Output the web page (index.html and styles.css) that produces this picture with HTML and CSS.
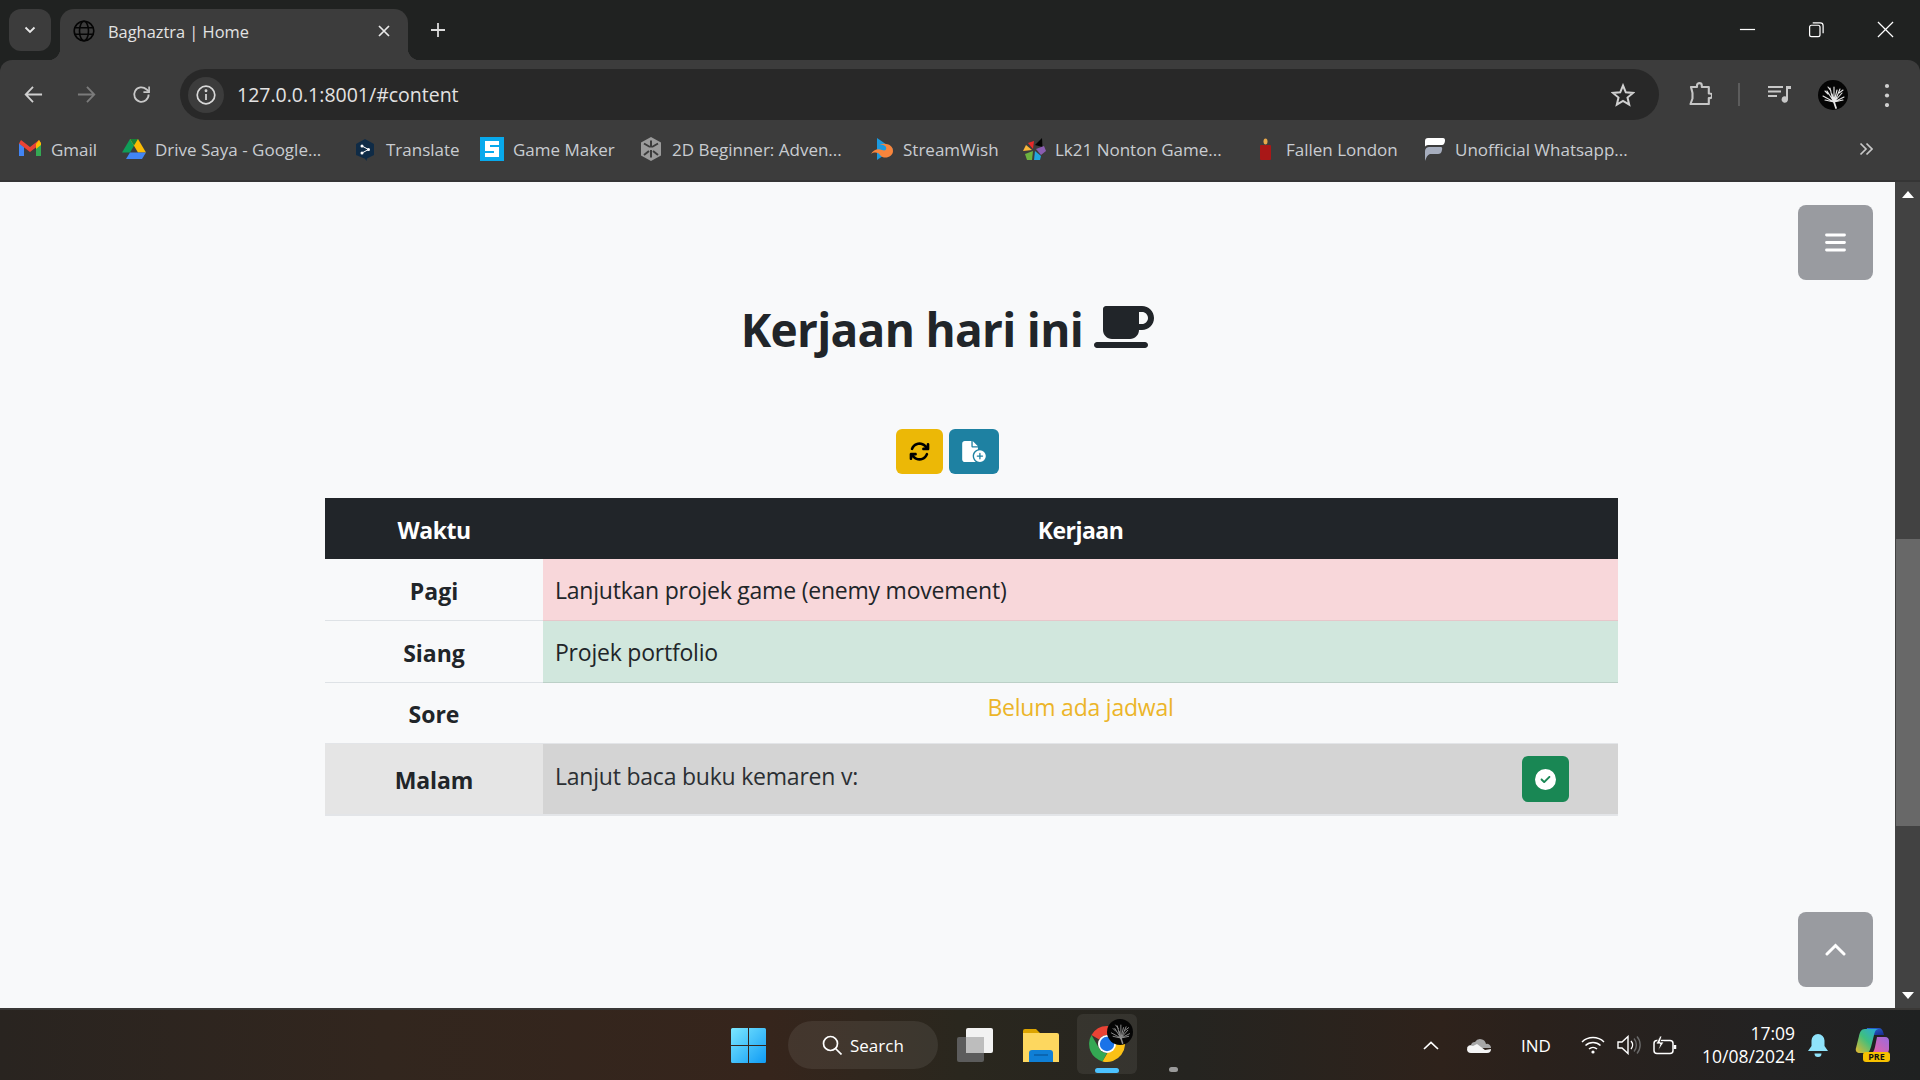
FILE: index.html
```html
<!DOCTYPE html>
<html lang="id">
<head>
<meta charset="utf-8">
<title>Baghaztra | Home</title>
<link rel="stylesheet" href="styles.css">
</head>
<body>
<svg class="defs" width="0" height="0" aria-hidden="true">
  <symbol id="avatar" viewBox="0 0 30 30">
    <ellipse cx="15" cy="15" rx="15" ry="15" fill="#050505"/>
    <g stroke="currentColor" stroke-width="1.1" fill="none" stroke-linecap="round">
      <path d="M16 22 14 14M16 22 9 11M16 22 19 10M16 22 24 13M16 22 5 16M16 22 26 17M15 21 12 8M16 21 16 7M17 21 22 9M16 22 7 20M16 22 25 20M10 14 7 11M21 13 25 10M13 11 10 7"/>
      <path d="M16 22 18 28" stroke-width="1.8"/>
    </g>
  </symbol>
</svg>

<header class="tabstrip">
  <div class="tablist-btn">
    <svg class="ico-chev" viewBox="0 0 12 8"><path d="M1.5 1.5 6 6l4.500-4.500" fill="none" stroke="#e8e8e8" stroke-width="1.8"/></svg>
  </div>
  <div class="tab">
    <svg class="tab-globe" viewBox="0 0 22 22" fill="none" stroke="#050505" stroke-width="1.600"><circle cx="11" cy="11" r="9.800"/><ellipse cx="11" cy="11" rx="4.500" ry="9.800"/><path d="M1.500 7.700h19M1.500 14.300h19"/></svg>
    <span class="tab-title">Baghaztra | Home</span>
    <svg class="tab-close" viewBox="0 0 12 12"><path d="M1 1l10 10M11 1 1 11" stroke="#e8e8e8" stroke-width="1.700"/></svg>
  </div>
  <svg class="tab-new" viewBox="0 0 16 16"><path d="M8 1v14M1 8h14" stroke="#dcdcdc" stroke-width="1.800"/></svg>
  <div class="win-controls">
    <svg class="win-ico" viewBox="0 0 18 18"><path d="M1 9h16" stroke="#fff" stroke-width="1.300"/></svg>
    <svg class="win-ico" viewBox="0 0 18 18" fill="none" stroke="#fff" stroke-width="1.300"><rect x="1.700" y="4.500" width="11" height="12" rx="2"/><path d="M5 2h8a3 3 0 0 1 3 3v8"/></svg>
    <svg class="win-ico" viewBox="0 0 18 18"><path d="M1 1l16 16M17 1 1 17" stroke="#fff" stroke-width="1.300"/></svg>
  </div>
</header>

<nav class="toolbar">
  <svg class="nav-ico" viewBox="0 0 20 20" fill="none" stroke="#d0d0d0" stroke-width="1.900"><path d="M19 10H2M9.500 2 1.800 10l7.700 8"/></svg>
  <svg class="nav-ico" viewBox="0 0 20 20" fill="none" stroke="#7b7b7b" stroke-width="1.900"><path d="M1 10h17M10.500 2l7.700 8-7.700 8"/></svg>
  <svg class="nav-ico" viewBox="0 0 20 20" fill="none" stroke="#c8c8c8" stroke-width="1.900"><path d="M17.500 10a7.600 7.600 0 1 1-2.400-5.500L18 7"/><path d="M18 1.500V7.500h-6" stroke-width="1.700"/></svg>
  <div class="omnibox">
    <span class="info-chip">
      <svg class="info-ico" viewBox="0 0 20 20" fill="none" stroke="#d8d8d8" stroke-width="1.700"><circle cx="10" cy="10" r="8.800"/><path d="M10 9v6"/><circle cx="10" cy="5.800" r=".6" fill="#d8d8d8"/></svg>
    </span>
    <span class="url">127.0.0.1:8001/#content</span>
    <svg class="star" viewBox="0 0 24 24" fill="none" stroke="#d0d0d0" stroke-width="2"><path d="M12 2.500 14.800 9.300l7.200.6-5.500 4.700 1.700 7.100L12 17.900l-6.200 3.800 1.700-7.100L2 9.900l7.200-.6z"/></svg>
  </div>
  <svg class="puzzle" viewBox="0 0 24 24" fill="none" stroke="#c6c6c6" stroke-width="2.100"><path d="M3 6h6V4.500a2.400 2.400 0 0 1 4.800 0V6h7v6.500h1a2.300 2.300 0 0 1 0 4.600h-1V23H2.500l2-5.500V12L3 6z" stroke-linejoin="round"/></svg>
  <span class="tool-sep"></span>
  <svg class="media" viewBox="0 0 23 18"><path d="M0 2h15M0 6.500h13M0 11h9" stroke="#c8c8c8" stroke-width="2"/><path d="M18 1h5v3h-3v10.500a3.200 3.200 0 1 1-2-3z" fill="#c8c8c8"/></svg>
  <svg class="avatar"><use href="#avatar"/></svg>
  <svg class="dots" viewBox="0 0 6 24"><circle cx="3" cy="3" r="2.100" fill="#d0d0d0"/><circle cx="3" cy="12.500" r="2.100" fill="#d0d0d0"/><circle cx="3" cy="22" r="2.100" fill="#d0d0d0"/></svg>
</nav>

<div class="bookmarks">
  <a class="bm">
    <svg class="bm-ico" viewBox="0 0 24 24"><path d="M1 6v13h5V10z" fill="#4285f4"/><path d="M18 10v9h5V6z" fill="#34a853"/><path d="M1 6.500 12 15l11-8.500-2-3.500-9 7-9-7z" fill="#ea4335"/><path d="M18 7v5l5-4V6l-2-3z" fill="#fbbc04"/></svg>
    <span>Gmail</span>
  </a>
  <a class="bm">
    <svg class="bm-ico" viewBox="0 0 24 24"><path d="M8 2h8L8 15.500H0z" fill="#0f9d58"/><path d="M8 2h8l8 13.500h-8z" fill="#fbbc04"/><path d="M8 15.500h16L20 22H4z" fill="#4285f4"/><path d="M8 2h8l-4 6.500z" fill="#188038"/></svg>
    <span>Drive Saya - Google...</span>
  </a>
  <a class="bm">
    <svg class="bm-ico" viewBox="0 0 24 24"><path d="M12 2 21 7v11l-7 3.500L13.500 24 12 21.800 3 18V7z" fill="#0f2b46"/><circle cx="9" cy="9" r="1.500" fill="#fff"/><circle cx="9" cy="16" r="1.500" fill="#fff"/><circle cx="15.500" cy="12.500" r="1.500" fill="#fff"/><path d="M9 9l6.500 3.500L9 16" stroke="#fff" fill="none"/></svg>
    <span>Translate</span>
  </a>
  <a class="bm">
    <svg class="bm-ico" viewBox="0 0 24 24"><rect width="24" height="24" fill="#08a9ec"/><path d="M5 4H19V8H10V10H19V20H5V16H14V14H5Z" fill="#fff"/></svg>
    <span>Game Maker</span>
  </a>
  <a class="bm">
    <svg class="bm-ico" viewBox="0 0 24 24" fill="#9b9b9b"><path d="M12 0 22 5.500v13L12 24 2 18.500v-13z"/><path d="M12 3.500v7M12 13v7.500M5 6.500l6 3.500M19 6.500l-6 3.500M5 18l5-4M19 18l-5-4" stroke="#3c3c3c" stroke-width="2"/></svg>
    <span>2D Beginner: Adven...</span>
  </a>
  <a class="bm">
    <svg class="bm-ico" viewBox="0 0 24 24"><path d="M7 1 23 12 7 23z" fill="#1b9ae0"/><path d="M8 8c8-3 15 0 15 6s-9 9-13 4c-2-3-6-3-9-1 2-4 7-6 11-4 3 1 5 0 4-3-1-2-5-3-8-2z" fill="#f8853c"/></svg>
    <span>StreamWish</span>
  </a>
  <a class="bm">
    <svg class="bm-ico" viewBox="0 0 24 24"><path d="M13 8l7-7 .5 9z" fill="#050505"/><path d="M11 12 6 6l6-2z" fill="#e82a2a"/><path d="M10 13 1 14l3-6z" fill="#f9b73a"/><path d="M14 12l8-3 2 5-5 4z" fill="#8a5db0"/><path d="M11 14l-1 9H5l-2-6z" fill="#6db33f"/><path d="M13 14l6 5-1 4h-6z" fill="#22a7e0"/></svg>
    <span>Lk21 Nonton Game...</span>
  </a>
  <a class="bm">
    <svg class="bm-ico" viewBox="0 0 24 24"><rect x="7" y="8" width="11" height="15" rx="1" fill="#a91717"/><ellipse cx="12.500" cy="4.500" rx="2" ry="3" fill="#e8a84a"/></svg>
    <span>Fallen London</span>
  </a>
  <a class="bm">
    <svg class="bm-ico" viewBox="0 0 24 24"><path d="M3 10V4c0-2 1-3 3-3h15c1.500 0 2.200 1 2 3-.3 2-1 4-3 4H8c-3 0-5 .5-5 2z" fill="#fff"/><path d="M3 24V15c0-4 2-5 5-5h11c1 0 1.500 1 1 3-.5 3-2 4-4 4H9c-3 0-4 2-6 7z" fill="#a6adbd"/></svg>
    <span>Unofficial Whatsapp...</span>
  </a>
  <svg class="bm-more" viewBox="0 0 14 14" fill="none" stroke="#c8c8c8" stroke-width="1.700"><path d="M1.500 1.500 7 7l-5.500 5.500M7.500 1.500 13 7l-5.500 5.500"/></svg>
</div>

<div class="viewport">
  <main class="page">
    <h1 class="heading">Kerjaan hari ini <svg class="cup" viewBox="0 0 640 512"><path d="M96 64c0-17.700 14.300-32 32-32H448h64c70.700 0 128 57.300 128 128s-57.300 128-128 128H480c0 53-43 96-96 96H192c-53 0-96-43-96-96V64zM480 224h32c35.300 0 64-28.700 64-64s-28.700-64-64-64H480V224zM32 416H544c17.700 0 32 14.300 32 32s-14.300 32-32 32H32c-17.700 0-32-14.300-32-32s14.300-32 32-32z"/></svg></h1>
    <div class="actions">
      <button class="btn btn-warn" type="button"><svg class="ico-sync" viewBox="0 0 512 512"><path d="M105.100 202.600c7.700-21.800 20.200-42.300 37.800-59.800c62.500-62.500 163.800-62.500 226.300 0L386.300 160H352c-17.700 0-32 14.300-32 32s14.300 32 32 32H463.500c0 0 0 0 0 0h.4c17.700 0 32-14.300 32-32V80c0-17.700-14.300-32-32-32s-32 14.300-32 32v35.200L414.400 97.600c-87.500-87.500-229.300-87.500-316.800 0C73.200 122 55.600 150.700 44.800 181.400c-5.900 16.700 2.900 34.900 19.500 40.800s34.900-2.900 40.800-19.500zM39 289.300c-5 1.500-9.800 4.200-13.700 8.200c-4 4-6.700 8.800-8.100 14c-.3 1.200-.6 2.500-.8 3.800c-.3 1.700-.4 3.400-.4 5.100V432c0 17.700 14.300 32 32 32s32-14.300 32-32V396.900l17.600 17.500 0 0c87.500 87.400 229.300 87.400 316.700 0c24.400-24.400 42.100-53.100 52.900-83.700c5.900-16.700-2.900-34.900-19.500-40.800s-34.900 2.900-40.800 19.500c-7.700 21.800-20.200 42.300-37.800 59.800c-62.500 62.500-163.800 62.500-226.300 0l-.1-.1L125.600 352H160c17.700 0 32-14.300 32-32s-14.300-32-32-32H48.400c-1.600 0-3.200 .1-4.800 .3s-3.100 .5-4.600 1z"/></svg></button>
      <button class="btn btn-info" type="button"><svg class="ico-file" viewBox="0 0 576 512"><path d="M0 64C0 28.700 28.700 0 64 0H224V128c0 17.700 14.300 32 32 32H384v38.600C310.100 219.500 256 287.400 256 368c0 59.100 29.100 111.300 73.700 143.300c-3.200 .5-6.400 .7-9.700 .7H64c-35.300 0-64-28.700-64-64V64zm384 64H256V0L384 128zm48 96a144 144 0 1 1 0 288 144 144 0 1 1 0-288zm16 80c0-8.800-7.200-16-16-16s-16 7.200-16 16v48H368c-8.800 0-16 7.200-16 16s7.200 16 16 16h48v48c0 8.800 7.200 16 16 16s16-7.200 16-16V384h48c8.800 0 16-7.200 16-16s-7.200-16-16-16H448V304z"/></svg></button>
    </div>
    <table class="schedule">
      <thead>
        <tr><th class="col-time">Waktu</th><th>Kerjaan</th></tr>
      </thead>
      <tbody>
        <tr class="row-task"><th>Pagi</th><td class="bg-danger">Lanjutkan projek game (enemy movement)</td></tr>
        <tr class="row-task"><th>Siang</th><td class="bg-success">Projek portfolio</td></tr>
        <tr class="row-empty"><th>Sore</th><td class="empty">Belum ada jadwal</td></tr>
        <tr class="row-done">
          <th>Malam</th>
          <td>
            <div class="done-cell">
              <span class="done-text">Lanjut baca buku kemaren v:</span>
              <button class="btn btn-ok" type="button"><svg class="ico-check" viewBox="0 0 512 512"><path d="M256 512A256 256 0 1 0 256 0a256 256 0 1 0 0 512zM369 209L241 337c-9.400 9.400-24.600 9.400-33.900 0l-64-64c-9.400-9.400-9.400-24.600 0-33.900s24.600-9.400 33.900 0l47 47L335 175c9.400-9.400 24.600-9.400 33.900 0s9.400 24.600 0 33.900z"/></svg></button>
            </div>
          </td>
        </tr>
      </tbody>
    </table>
    <button class="float-btn float-top" type="button"><svg class="ico-bars" viewBox="0 0 21 19"><path d="M1.500 2h18M1.500 9.500h18M1.500 17h18" stroke="#fff" stroke-width="2.800" stroke-linecap="round"/></svg></button>
    <button class="float-btn float-bottom" type="button"><svg class="ico-up" viewBox="0 0 21 13"><path d="M2 11 10.500 2.500 19 11" fill="none" stroke="#fff" stroke-width="3" stroke-linecap="round"/></svg></button>
  </main>
  <aside class="scrollbar">
    <span class="sb-arrow sb-arrow-up"></span>
    <div class="sb-track"><div class="sb-thumb"></div></div>
    <span class="sb-arrow sb-arrow-down"></span>
  </aside>
</div>

<footer class="taskbar">
  <svg class="tb-win" viewBox="0 0 35 35">
    <defs><linearGradient id="wg" x1="0" y1="0" x2="1" y2="1"><stop offset="0" stop-color="#7ce8ff"/><stop offset="1" stop-color="#0f9bf5"/></linearGradient></defs>
    <path d="M1.500 0H17V17H0V1.500A1.500 1.500 0 0 1 1.500 0zM18 0h15.500A1.500 1.500 0 0 1 35 1.500V17H18zM0 18h17v17H1.500A1.500 1.500 0 0 1 0 33.500zM18 18h17v15.500a1.500 1.500 0 0 1-1.500 1.500H18z" fill="url(#wg)"/>
  </svg>
  <div class="tb-search">
    <svg class="tb-search-ico" viewBox="0 0 20 20" fill="none" stroke="#fff" stroke-width="1.700"><circle cx="8.500" cy="8.500" r="7"/><path d="M13.500 13.500 19.500 19.500"/></svg>
    <span>Search</span>
  </div>
  <svg class="tb-view" viewBox="0 0 36 34"><rect y="9" width="27" height="25" rx="2" fill="#5c5c5c"/><rect x="9" width="27" height="25" rx="2" fill="#f2f2f2"/><rect x="9" y="9" width="18" height="16" fill="#bdbdbd"/></svg>
  <svg class="tb-folder" viewBox="0 0 36 33"><path d="M0 2a2 2 0 0 1 2-2h11l4 4H0z" fill="#dca400"/><path d="M0 4h34a2 2 0 0 1 2 2v27H0z" fill="#fdd75f"/><path d="M6 33V24a3 3 0 0 1 3-3h18a3 3 0 0 1 3 3v9z" fill="#0f7fd6"/><path d="M11 26h14" stroke="#0a5ea6" stroke-width="1.500"/></svg>
  <div class="tb-chrome-tile">
    <svg class="tb-chrome" viewBox="0 0 36 36">
      <path d="M18 0a18 18 0 0 1 15.600 9H18a9 9 0 0 0-7.800 4.500L2.500 9A18 18 0 0 1 18 0z" fill="#ea4335"/>
      <path d="M2.500 9l7.700 13.500A9 9 0 0 0 18 27l-4.500 8.400A18 18 0 0 1 2.500 9z" fill="#34a853"/>
      <path d="M33.600 9A18 18 0 0 1 13.500 35.400L21 22.500A9 9 0 0 0 25.800 13.500z" fill="#fbc116"/>
      <circle cx="18" cy="18" r="9" fill="#fff"/><circle cx="18" cy="18" r="7.200" fill="#1a73e8"/>
    </svg>
    <svg class="tb-chrome-av"><use href="#avatar"/></svg>
    <span class="tb-indicator"></span>
  </div>
  <span class="tb-dot"></span>
  <svg class="tray-caret" viewBox="0 0 16 9"><path d="M1 8 8 1.500 15 8" fill="none" stroke="#fff" stroke-width="1.700"/></svg>
  <svg class="tray-cloud" viewBox="0 0 24 16"><path d="M4 8a4 4 0 0 1 4-3 6 6 0 0 1 11 2A4 4 0 0 1 24 11H0a4 4 0 0 1 4-3z" fill="#a7a7a7"/><path d="M0 12a4 4 0 0 1 6-3l4-2 8 6 6-1a4 4 0 0 1-4 4H4a4 4 0 0 1-4-4z" fill="#f5f5f5"/></svg>
  <span class="tray-lang">IND</span>
  <svg class="tray-wifi" viewBox="0 0 24 18" fill="none" stroke="#fff" stroke-width="1.500"><path d="M1 6a16 16 0 0 1 22 0M4.500 9.500a11 11 0 0 1 15 0M8 13a6 6 0 0 1 8 0"/><circle cx="12" cy="16" r="1.600" fill="#fff" stroke="none"/></svg>
  <svg class="tray-vol" viewBox="0 0 24 20" fill="none" stroke="#fff" stroke-width="1.400"><path d="M1 7h4l6-5.500v17L5 13H1z"/><path d="M14 6a6 6 0 0 1 0 8"/><path d="M17 3.500a10 10 0 0 1 0 13M20 1.500a13 13 0 0 1 0 17" stroke="#6a6a6a"/></svg>
  <svg class="tray-bat" viewBox="0 0 24 20" fill="none" stroke="#fff" stroke-width="1.500"><rect x="1" y="5.500" width="19" height="13" rx="3"/><path d="M22 10v4" stroke-width="2.500"/><path d="M7 1 3 9h4l-2 7 6-9H7l2-6z" fill="#fff" stroke="#241f1c" stroke-width=".8"/></svg>
  <div class="tray-clock"><span>17:09</span><span>10/08/2024</span></div>
  <svg class="tray-bell" viewBox="0 0 20 23"><path d="M10 0a6.500 6.500 0 0 1 6.500 6.500V12l3.500 5H0l3.500-5V6.500A6.500 6.500 0 0 1 10 0z" fill="#8fe3fb"/><path d="M6.500 19.500h7a3.500 3.500 0 0 1-7 0z" fill="#8fe3fb"/></svg>
  <div class="tray-copilot">
    <svg class="copilot-ico" viewBox="0 0 34 27">
      <defs>
        <linearGradient id="cg1" x1="0" y1="1" x2="1" y2="0"><stop offset="0" stop-color="#e9b72c"/><stop offset=".5" stop-color="#3fbf7f"/><stop offset="1" stop-color="#25a6e6"/></linearGradient>
        <linearGradient id="cg2" x1="0" y1="0" x2="1" y2="1"><stop offset="0" stop-color="#2a6fe0"/><stop offset="1" stop-color="#1a2a8c"/></linearGradient>
        <linearGradient id="cg3" x1="0" y1="1" x2="1" y2="0"><stop offset="0" stop-color="#f0609b"/><stop offset="1" stop-color="#9a6be0"/></linearGradient>
      </defs>
      <path d="M12 0h12c3 0 4 3 5 7H10z" fill="url(#cg2)"/>
      <path d="M10 1C6 1 5 4 4 8L1 20c-1 3 1 5 4 5h6c3 0 4-3 5-6l3-12c1-4 2-6 5-6z" fill="url(#cg1)"/>
      <path d="M22 9h8c3 0 4 2 4 4v8c0 3-2 5-5 5H15c3-1 4-3 5-7z" fill="url(#cg3)"/>
    </svg>
    <span class="copilot-pre">PRE</span>
  </div>
</footer>
</body>
</html>
```

FILE: styles.css
```css
* { box-sizing: border-box; }
html, body { margin: 0; padding: 0; height: 100%; overflow: hidden; }
body {
  width: 1920px;
  height: 1080px;
  display: flex;
  flex-direction: column;
  background: #202221;
  font-family: "Open Sans", "Noto Sans", sans-serif;
}
svg { display: block; flex: none; }
.defs { position: absolute; }

/* Browser chrome */
.tabstrip {
  height: 60px;
  flex: none;
  background: #202221;
  display: flex;
  align-items: flex-start;
  padding: 9px 0 0 9px;
}
.tablist-btn {
  width: 42px;
  height: 42px;
  border-radius: 12px;
  background: #3c3c3c;
  display: flex;
  align-items: center;
  justify-content: center;
}
.ico-chev { width: 12px; height: 8px; }
.tab {
  position: relative;
  width: 348px;
  height: 51px;
  margin-left: 9px;
  background: #3c3c3c;
  border-radius: 14px 14px 0 0;
  display: flex;
  align-items: center;
  padding: 0 18px 8px 13px;
  color: #e3e3e3;
}
.tab::before, .tab::after {
  content: "";
  position: absolute;
  bottom: 0;
  width: 12px;
  height: 12px;
}
.tab::before { left: -12px; background: radial-gradient(circle at 0 0, transparent 12px, #3c3c3c 12.500px); }
.tab::after { right: -12px; background: radial-gradient(circle at 100% 0, transparent 12px, #3c3c3c 12.500px); }
.tab-globe { width: 22px; height: 22px; }
.tab-title {
  margin-left: 13px;
  padding-top: 2px;
  flex: 1;
  font-size: 16.400px;
  white-space: nowrap;
}
.tab-close { width: 12px; height: 12px; }
.tab-new { width: 16px; height: 16px; margin: 13px 0 0 22px; }
.win-controls {
  margin-left: auto;
  margin-right: 26px;
  display: flex;
  gap: 52px;
  padding-top: 12px;
}
.win-ico { width: 17px; height: 17px; }

.toolbar {
  height: 60px;
  flex: none;
  background: #3c3c3c;
  border-radius: 12px 12px 0 0;
  display: flex;
  align-items: flex-start;
  padding: 9px 0 0 24px;
}
.nav-ico { width: 19px; height: 19px; margin: 16px 34px 0 0; }
.nav-ico:nth-child(2) { margin-right: 36px; }
.omnibox {
  width: 1479px;
  height: 51px;
  margin-left: -5px;
  border-radius: 26px;
  background: #282828;
  display: flex;
  align-items: center;
  padding: 0 24px 0 8px;
}
.info-chip {
  width: 36px;
  height: 36px;
  border-radius: 50%;
  background: #3c3c3c;
  display: flex;
  align-items: center;
  justify-content: center;
}
.info-ico { width: 20px; height: 20px; }
.url {
  margin-left: 13px;
  flex: 1;
  color: #e3e3e3;
  font-size: 19.500px;
}
.star { width: 24px; height: 24px; }
.puzzle { width: 24px; height: 24px; margin: 12px 0 0 29px; }
.tool-sep { width: 2px; height: 23px; background: #5c5c5c; margin: 14px 0 0 26px; }
.media { width: 23px; height: 18px; margin: 16px 0 0 28px; }
.avatar { width: 30px; height: 30px; margin: 11px 0 0 27px; color: #e8e8e8; }
.dots { width: 6px; height: 24px; margin: 14px 0 0 36px; }

.bookmarks {
  height: 62px;
  flex: none;
  background: #3c3c3c;
  border-bottom: 2px solid #353535;
  display: grid;
  grid-template-columns: 104px 231px 127px 159px 231px 152px 231px 169px 1fr auto;
  align-items: center;
  padding: 0 47px 2px 18px;
  color: #c9ccd1;
  font-size: 17px;
}
.bm { display: flex; align-items: center; gap: 9px; white-space: nowrap; }
.bm-ico { width: 24px; height: 24px; }
.bm-more { width: 14px; height: 14px; }

/* Page */
.viewport {
  flex: 1;
  min-height: 0;
  display: flex;
}
.page {
  position: relative;
  flex: 1;
  min-width: 0;
  background: #f8f9fa;
  color: #212529;
}
.heading {
  margin: 0;
  padding-top: 115px;
  height: 172px;
  line-height: 64px;
  font-size: 46px;
  font-weight: 700;
  letter-spacing: -.7px;
  text-align: center;
  white-space: nowrap;
}
.cup {
  display: inline-block;
  width: 60px;
  height: 48px;
  vertical-align: -4px;
  fill: #212529;
}
.actions {
  display: flex;
  justify-content: center;
  gap: 6px;
  margin-top: 75px;
}
.btn {
  border: 0;
  padding: 0;
  border-radius: 6px;
  display: flex;
  align-items: center;
  justify-content: center;
}
.btn-warn { width: 47px; height: 45px; background: #ecb806; }
.btn-info { width: 50px; height: 45px; background: #1e81a2; }
.btn-ok { width: 47px; height: 46px; background: #198754; flex: none; }
.ico-sync { width: 21px; height: 21px; fill: #000; }
.ico-file { width: 24px; height: 21px; fill: #fff; }
.ico-check { width: 21px; height: 21px; fill: #fff; }

.schedule {
  width: 1293px;
  margin: 24px 0 0 325px;
  border-collapse: separate;
  border-spacing: 0;
  table-layout: fixed;
  font-size: 23px;
}
.schedule th, .schedule td { padding: 0 12px; }
.schedule thead th {
  height: 61px;
  background: #212529;
  color: #fff;
  text-align: center;
  letter-spacing: -.5px;
  font-weight: 700;
  padding-top: 2px;
}
.col-time { width: 218px; }
.schedule tbody th {
  text-align: center;
  font-weight: 700;
  padding-top: 2px;
}
.schedule tbody td { letter-spacing: -.22px; }
.row-task { height: 62px; }
.row-task th, .row-task td { border-bottom: 1px solid #dee2e6; }
.bg-danger { background: #f8d7da; border-bottom-color: #e6c7ca !important; }
.bg-success { background: #d1e7dd; border-bottom-color: #bcd0c7 !important; }
.row-empty { height: 60px; }
.empty { text-align: center; color: #ecb529; vertical-align: top; padding-top: 8px !important; }
.row-done { height: 73px; }
.row-done th, .row-done td { border-top: 1px solid #e3e5e8; border-bottom: 2px solid #e3e5e8; }
.row-done th { background: #e5e5e5; letter-spacing: -.1px; }
.schedule .row-done td { background: #d4d4d4; padding: 12px 49px 0 12px; vertical-align: top; }
.done-cell { display: flex; justify-content: space-between; }
.done-text { color: #2b2f33; margin-top: 4px; }

.float-btn {
  position: absolute;
  right: 22px;
  width: 75px;
  height: 75px;
  border: 0;
  padding: 0;
  border-radius: 8px;
  background: #999ba0;
  display: flex;
  align-items: center;
  justify-content: center;
}
.float-top { top: 23px; }
.float-bottom { top: 730px; }
.ico-bars { width: 21px; height: 19px; }
.ico-up { width: 21px; height: 13px; }

.scrollbar {
  width: 25px;
  background: #424242;
  display: flex;
  flex-direction: column;
  align-items: center;
}
.sb-arrow { width: 0; height: 0; border-left: 6px solid transparent; border-right: 6px solid transparent; flex: none; }
.sb-arrow-up { border-bottom: 7px solid #fff; margin-top: 9px; }
.sb-arrow-down { border-top: 7px solid #fff; margin-bottom: 9px; }
.sb-track { flex: 1; width: 100%; padding-top: 341px; }
.sb-thumb { height: 287px; margin-left: 1px; background: #686868; }

/* Taskbar */
.taskbar {
  height: 72px;
  flex: none;
  background: linear-gradient(90deg, #292420 0, #32261e 20%, #36251c 40%, #2a271e 50%, #252420 62%, #2e221b 75%, #2a211c 80%, #232222 92%, #1f2121 100%);
  border-top: 2px solid #3a3836;
  color: #fff;
  display: flex;
  align-items: center;
  padding-left: 731px;
}
.tb-win { width: 35px; height: 35px; }
.tb-search {
  width: 150px;
  height: 48px;
  margin-left: 22px;
  border-radius: 24px;
  background: rgba(255, 255, 255, .08);
  display: flex;
  align-items: center;
  padding-left: 34px;
  gap: 8px;
  font-size: 17px;
}
.tb-search-ico { width: 20px; height: 20px; }
.tb-view { width: 36px; height: 34px; margin-left: 19px; }
.tb-folder { width: 36px; height: 33px; margin-left: 30px; }
.tb-chrome-tile {
  position: relative;
  width: 60px;
  height: 60px;
  margin: -2px 0 0 18px;
  border-radius: 6px;
  background: rgba(255, 255, 255, .07);
  display: flex;
  align-items: center;
  justify-content: center;
}
.tb-chrome { width: 36px; height: 36px; }
.tb-chrome-av { position: absolute; top: 5px; left: 30px; width: 26px; height: 26px; color: #8f8f8f; }
.tb-indicator {
  position: absolute;
  bottom: 1px;
  left: 18px;
  width: 24px;
  height: 5px;
  border-radius: 3px;
  background: #4cc2ff;
}
.tb-dot {
  width: 9px;
  height: 5px;
  margin: 48px 0 0 32px;
  border-radius: 3px;
  background: #9a9a9a;
}
.tray-caret { width: 16px; height: 9px; margin-left: 245px; }
.tray-cloud { width: 24px; height: 16px; margin-left: 28px; }
.tray-lang { margin-left: 30px; width: 30px; white-space: nowrap; font-size: 17px; }
.tray-wifi { width: 24px; height: 18px; margin-left: 30px; }
.tray-vol { width: 24px; height: 20px; margin-left: 12px; }
.tray-bat { width: 24px; height: 20px; margin-left: 12px; }
.tray-clock {
  width: 118px;
  display: flex;
  flex-direction: column;
  align-items: flex-end;
  line-height: 23px;
  font-size: 17.500px;
}
.tray-bell { width: 20px; height: 23px; margin-left: 13px; }
.tray-copilot { position: relative; width: 35px; height: 34px; margin-left: 27px; }
.copilot-ico { width: 34px; height: 27px; }
.copilot-pre {
  position: absolute;
  right: 0;
  bottom: 0;
  width: 27px;
  height: 10px;
  border-radius: 3px;
  background: #f7c100;
  color: #111;
  font-size: 9px;
  font-weight: 700;
  line-height: 10px;
  text-align: center;
}
```
